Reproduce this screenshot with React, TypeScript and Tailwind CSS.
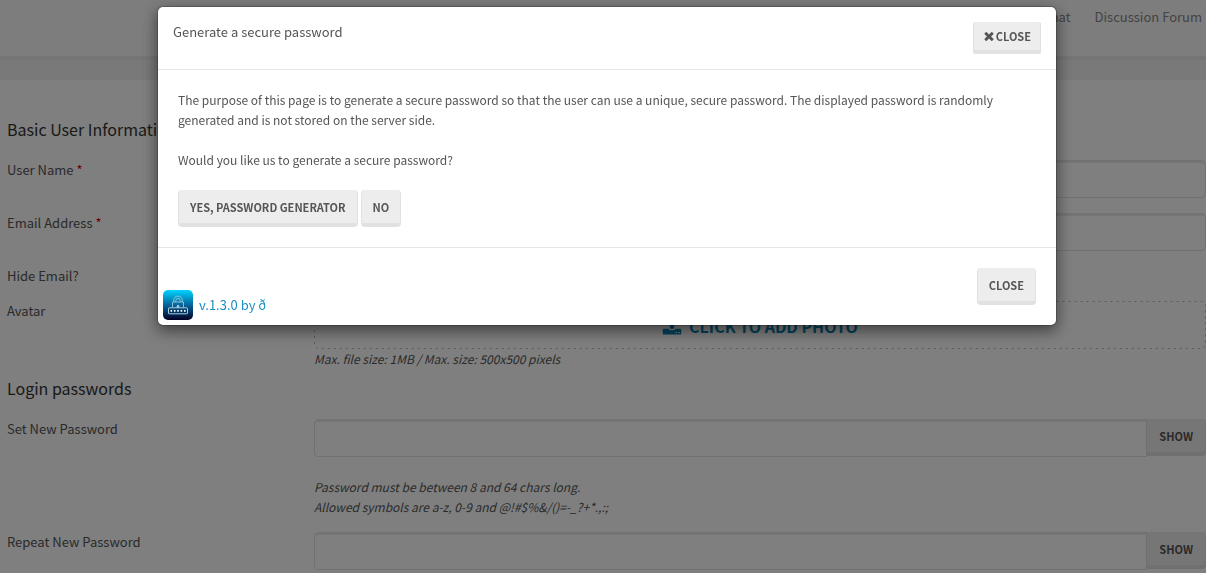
import { ReactNode, useState } from 'react';

interface ButtonProps {
  children: ReactNode;
  className?: string;
  onClick?: () => void;
}

function Button({ children, className = 'h-[37px] rounded px-[11px]', onClick }: ButtonProps) {
  return (
    <button
      type="button"
      onClick={onClick}
      className={`flex shrink-0 items-center justify-center border-x border-b-4 border-[#e1e1e1] bg-[#ededed] text-[11px] leading-5 font-bold text-[#555] uppercase ${className}`}
    >
      {children}
    </button>
  );
}

interface FieldProps {
  id: string;
  label: string;
  required?: boolean;
  children?: ReactNode;
}

function Field({ id, label, required, children }: FieldProps) {
  return (
    <div className="flex">
      <label htmlFor={id} className="w-[307px] shrink-0">
        {label} {required && <span className="text-[#e00000]">*</span>}
      </label>
      <div className="min-w-0 flex-1">{children}</div>
    </div>
  );
}

const inputClass =
  'block h-[38px] w-full min-w-0 border border-[#e3e3e3] bg-white px-3 shadow-[inset_0_2px_0_#ebebeb] outline-none';

function PasswordInput({ id }: { id: string }) {
  const [visible, setVisible] = useState(false);

  return (
    <div className="flex items-start">
      <input id={id} type={visible ? 'text' : 'password'} className={`${inputClass} rounded-l`} />
      <Button className="-ml-px h-[37px] rounded-r px-3" onClick={() => setVisible(!visible)}>
        {visible ? 'Hide' : 'Show'}
      </Button>
    </div>
  );
}

function TimesIcon() {
  return (
    <svg viewBox="110 110 1572 1572" className="mr-px size-3" fill="currentColor" aria-hidden="true">
      <path d="M1490 1322q0 40-28 68l-136 136q-28 28-68 28t-68-28l-294-294-294 294q-28 28-68 28t-68-28l-136-136q-28-28-28-68t28-68l294-294-294-294q-28-28-28-68t28-68l136-136q28-28 68-28t68 28l294 294 294-294q28-28 68-28t68 28l136 136q28 28 28 68t-28 68l-294 294 294 294q28 28 28 68z" />
    </svg>
  );
}

function UploadIcon() {
  return (
    <svg viewBox="0 0 1792 1792" className="size-5" fill="currentColor" aria-hidden="true">
      <path d="M1344 1472q0-26-19-45t-45-19-45 19-19 45 19 45 45 19 45-19 19-45zm256 0q0-26-19-45t-45-19-45 19-19 45 19 45 45 19 45-19 19-45zm128-224v320q0 40-28 68t-68 28h-1472q-40 0-68-28t-28-68v-320q0-40 28-68t68-28h427q21 56 70.5 92t110.5 36h256q61 0 110.5-36t70.5-92h427q40 0 68 28t28 68zm-325-648q-17 39-59 39h-256v448q0 26-19 45t-45 19h-256q-26 0-45-19t-19-45v-448h-256q-42 0-59-39-17-40 14-69l448-448q18-19 45-19t45 19l448 448q31 30 14 69z" />
    </svg>
  );
}

function PluginLogo() {
  return (
    <svg viewBox="0 0 30 30" className="size-[30px]" fill="none" aria-hidden="true">
      <defs>
        <linearGradient id="logo-bg" x1="0" y1="0" x2="0" y2="1">
          <stop offset="0" stopColor="#00d4ff" />
          <stop offset="0.5" stopColor="#06649a" />
          <stop offset="1" stopColor="#020024" />
        </linearGradient>
      </defs>
      <rect width="30" height="30" rx="5" fill="url(#logo-bg)" />
      <g stroke="#a9cfe2" strokeWidth="0.8">
        <path d="M10.7 12v-1.6a4.3 4.3 0 0 1 8.6 0V12" />
        <path d="M12.8 12v-1.4a2.2 2.2 0 0 1 4.4 0V12" />
        <path d="M9.5 17.5V12h11v5.5" />
        <path d="M14 17.2v-1a1 1 0 1 1 2 0v1z" fill="#a9cfe2" />
        <rect x="5.5" y="17.8" width="19" height="6" rx="0.6" strokeWidth="1" />
      </g>
      <path d="M7.5 20.8h1.6m1.8 0h1.6m1.7 0h1.6m1.8 0h1.6m1.8 0h1.6" stroke="#fff" strokeWidth="1.7" />
    </svg>
  );
}

interface PasswordModalProps {
  onClose: () => void;
}

function PasswordModal({ onClose }: PasswordModalProps) {
  return (
    <div className="fixed inset-0 overflow-hidden bg-black/50 pt-1.5 pl-2">
      <div
        role="dialog"
        aria-modal="true"
        aria-labelledby="modal-title"
        className="mx-auto max-w-[900px] rounded-md border border-black/20 bg-white bg-clip-padding shadow-[0_5px_15px_rgba(0,0,0,0.5)]"
      >
        <div className="flex items-start justify-between border-b border-[#e5e5e5] p-[15px]">
          <h4 id="modal-title">Generate a secure password</h4>
          <Button className="h-8 rounded-xs px-[9px]" onClick={onClose}>
            <TimesIcon />
            Close
          </Button>
        </div>

        <div className="p-5 text-xs leading-5">
          <p>
            The purpose of this page is to generate a secure password so that the user can use a
            unique, secure password. The displayed password is randomly generated and is not stored
            on the server side.
          </p>
          <p className="mt-5">Would you like us to generate a secure password?</p>
          <div className="mt-5 flex gap-[3px]">
            <Button>Yes, password generator</Button>
            <Button onClick={onClose}>No</Button>
          </div>
        </div>

        <div className="flex items-end justify-between border-t border-[#e5e5e5] p-[5px]">
          <a href="#" className="flex items-center gap-1.5 text-[#1a8fc1]">
            <PluginLogo />
            v.1.3.0 by ð
          </a>
          <div className="p-[15px]">
            <Button onClick={onClose}>Close</Button>
          </div>
        </div>
      </div>
    </div>
  );
}

export default function App() {
  const [open, setOpen] = useState(true);

  return (
    <div className="h-screen overflow-hidden bg-white font-['Noto_Sans_CJK_SC',sans-serif] text-[13px] leading-5 text-[#555]">
      <header className="border-b-4 border-[#ebebeb] bg-[#fafafa]">
        <nav className="-mr-1.5 flex h-14 justify-end gap-6 pt-[7px] text-[#888]">
          <a href="#">Chat</a>
          <a href="#" className="flex items-start gap-1">
            Discussion Forum
            <span className="mt-2 border-x-[3px] border-t-[3px] border-x-transparent border-t-current" />
          </a>
        </nav>
      </header>
      <div className="h-5 bg-[#f2f2f2]" />

      <form className="pt-[39px] pl-[7px]">
        <h3 className="mb-[21px] text-base leading-5 text-[#333]">Basic User Information</h3>
        <div className="flex flex-col gap-[15px]">
          <Field id="username" label="User Name" required>
            <input id="username" className={`${inputClass} rounded`} />
          </Field>
          <Field id="email" label="Email Address" required>
            <input id="email" type="email" className={`${inputClass} rounded`} />
          </Field>
          <Field id="hide-email" label="Hide Email?">
            <input id="hide-email" type="checkbox" className="block" />
          </Field>
          <Field id="avatar" label="Avatar">
            <button
              id="avatar"
              type="button"
              className="relative flex h-12 w-full items-center justify-center gap-[7px] pt-0.5 text-base font-bold text-[#0a85b5] uppercase"
            >
              <svg className="absolute inset-0 size-full text-[#b5b5b5]" fill="none" aria-hidden="true">
                <rect
                  x="0.5"
                  y="0.5"
                  rx="4"
                  className="h-[calc(100%-1px)] w-[calc(100%-1px)]"
                  stroke="currentColor"
                  strokeDasharray="2 4"
                />
              </svg>
              <UploadIcon />
              Click to add photo
            </button>
            <p className="text-xs leading-5 italic">Max. file size: 1MB / Max. size: 500x500 pixels</p>
          </Field>
        </div>

        <h3 className="mt-[9px] mb-[21px] text-base leading-5 text-[#333]">Login passwords</h3>
        <div className="flex flex-col gap-[15px]">
          <Field id="password" label="Set New Password">
            <PasswordInput id="password" />
            <p className="mt-5 text-xs leading-5 italic">
              Password must be between 8 and 64 chars long.
              <br />
              Allowed symbols are a-z, 0-9 and @!#$%&/()=-_?+*.,:;
            </p>
          </Field>
          <Field id="password-repeat" label="Repeat New Password">
            <PasswordInput id="password-repeat" />
          </Field>
        </div>
      </form>

      {open && <PasswordModal onClose={() => setOpen(false)} />}
    </div>
  );
}
